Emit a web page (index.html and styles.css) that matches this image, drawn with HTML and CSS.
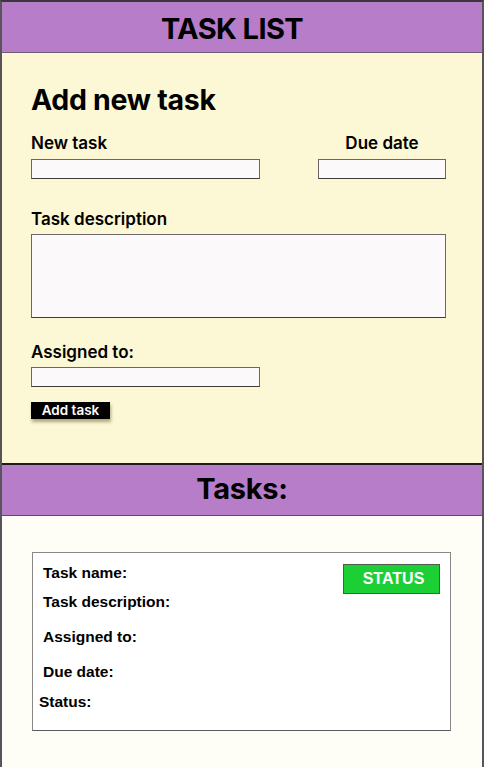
FILE: index.html
```html
<!DOCTYPE html>
<html>
<head>
<meta charset="utf-8">
<link rel="stylesheet" href="styles.css">
</head>
<body>
<div class="page">
  <header class="bar bar-top"><h1 class="bar-title">TASK LIST</h1></header>
  <section class="form">
    <h2 class="form-title">Add new task</h2>
    <div class="row">
      <div class="field field-task">
        <label class="label">New task</label>
        <input class="input input-wide" type="text">
      </div>
      <div class="field field-date">
        <label class="label label-center">Due date</label>
        <input class="input input-date" type="text">
      </div>
    </div>
    <div class="field field-desc">
      <label class="label">Task description</label>
      <textarea class="input textarea"></textarea>
    </div>
    <div class="field field-assigned">
      <label class="label">Assigned to:</label>
      <input class="input input-wide" type="text">
    </div>
    <button class="btn-add">Add task</button>
  </section>
  <header class="bar bar-tasks"><h2 class="bar-title">Tasks:</h2></header>
  <section class="tasks">
    <div class="card">
      <div class="card-top">
        <div class="card-line">Task name:</div>
        <button class="status-btn">STATUS</button>
      </div>
      <div class="card-line line-desc">Task description:</div>
      <div class="card-line line-assigned">Assigned to:</div>
      <div class="card-line line-due">Due date:</div>
      <div class="card-line line-status">Status:</div>
    </div>
  </section>
</div>
</body>
</html>
```
FILE: styles.css
```css
* { box-sizing: border-box; }
html, body { margin: 0; padding: 0; }
body {
  background: #fffef6;
  font-family: Inter, "Liberation Sans", sans-serif;
  color: #000;
}
.page {
  width: 484px;
  height: 767px;
  border-top: 2px solid #3a383c;
  border-left: 2px solid #57545a;
  border-right: 2px solid #57545a;
  display: flex;
  flex-direction: column;
}
.bar {
  background: #b77dc9;
  display: flex;
  align-items: center;
  justify-content: center;
}
.bar-top {
  height: 51px;
  border-bottom: 1px solid #6e5d70;
  padding-right: 20px;
}
.bar-tasks {
  height: 51px;
  border-bottom: 1px solid #5a4f5c;
}
.bar-title {
  margin: 0;
  font-family: Inter, sans-serif;
  font-weight: 700;
  font-size: 29px;
  line-height: 34px;
  letter-spacing: -0.3px;
}
.bar-top .bar-title { margin-top: 4px; letter-spacing: -0.6px; }
.bar-tasks .bar-title { margin-top: -3px; }

.form {
  background: #fcf7d4;
  height: 412px;
  border-bottom: 2px solid #1e1c1a;
  padding: 30px 0 0 29px;
  display: flex;
  flex-direction: column;
  align-items: flex-start;
}
.form-title {
  margin: 0;
  font-size: 28.5px;
  font-weight: 700;
  line-height: 34px;
  letter-spacing: -0.3px;
}
.row {
  display: flex;
  gap: 58px;
  margin-top: 16px;
}
.field {
  display: flex;
  flex-direction: column;
  align-items: flex-start;
}
.field-date { align-items: center; }
.label {
  font-size: 17px;
  font-weight: 600;
  line-height: 20px;
  margin-bottom: 6px;
}
.field-desc { margin-top: 30px; }
.field-desc .label { margin-bottom: 5px; }
.field-assigned { margin-top: 24px; }
.field-assigned .label { margin-bottom: 5px; }
.input {
  display: block;
  margin: 0;
  padding: 0;
  background: #fcf9fb;
  border: 1px solid #6a6766;
  border-bottom-color: #3e3c3a;
  height: 20px;
  font: inherit;
}
.input-wide { width: 229px; }
.input-date { width: 128px; }
.textarea {
  width: 415px;
  height: 84px;
  resize: none;
}
.btn-add {
  margin-top: 15px;
  width: 79px;
  height: 17px;
  background: #000;
  color: #fff;
  border: none;
  padding: 0;
  font-family: Inter, sans-serif;
  font-size: 13.5px;
  font-weight: 600;
  line-height: 17px;
  box-shadow: 1px 3px 3px rgba(80, 70, 30, 0.45);
}
.tasks {
  flex: 1;
  background: #fffef6;
  padding: 36px 0 0 30px;
}
.card {
  width: 419px;
  height: 179px;
  background: #fff;
  border: 1px solid #8a8886;
  border-bottom-color: #5e5c5a;
  padding: 11px 10px 0 10px;
  display: flex;
  flex-direction: column;
  align-items: flex-start;
}
.card-top {
  width: 100%;
  display: flex;
  justify-content: space-between;
  align-items: flex-start;
}
.card-line {
  font-family: "Liberation Sans", Arial, sans-serif;
  font-weight: 700;
  font-size: 15.5px;
  line-height: 18px;
}
.status-btn {
  width: 97px;
  height: 30px;
  background: #1ccf34;
  border: 1px solid #4d5a4d;
  color: #fff;
  font-family: "Liberation Sans", Arial, sans-serif;
  font-weight: 700;
  font-size: 16px;
  padding: 0 0 0 4px;
}
.line-desc { margin-top: -1px; }
.line-assigned { margin-top: 17px; }
.line-due { margin-top: 17px; }
.line-status { margin-top: 12px; margin-left: -4px; }
```
